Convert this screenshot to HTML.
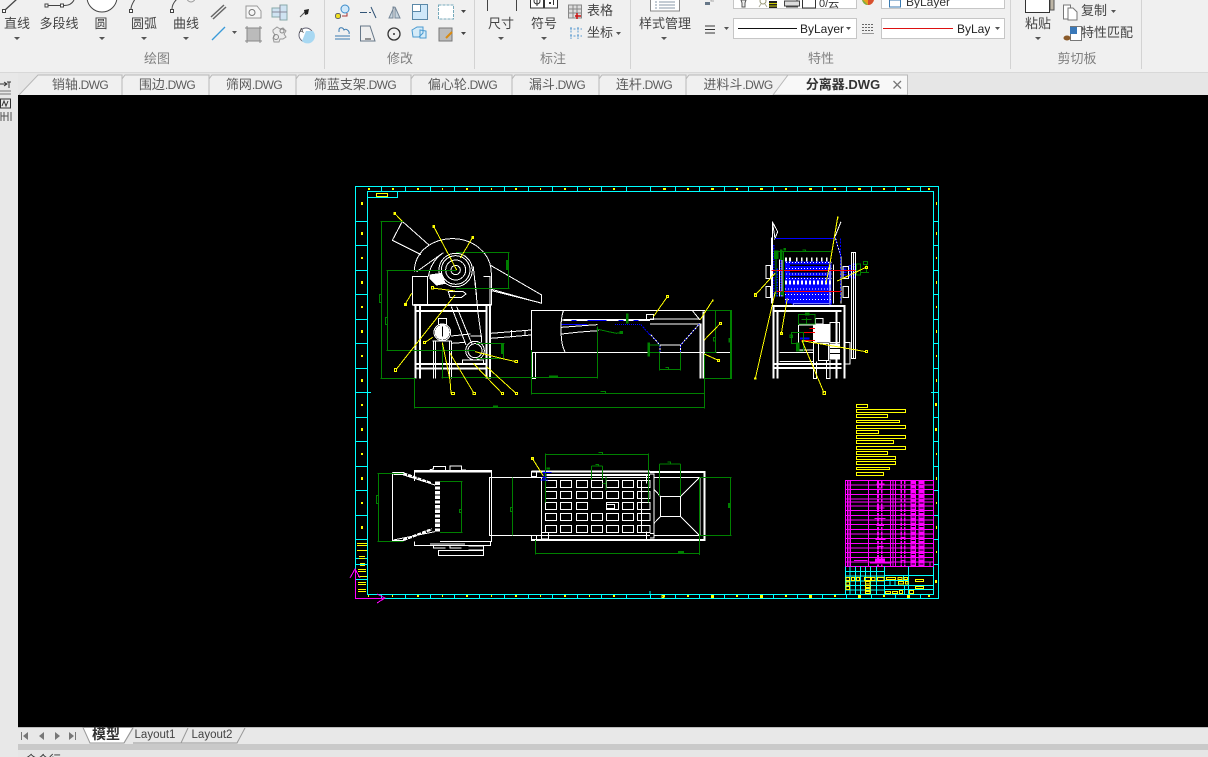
<!DOCTYPE html>
<html lang="zh">
<head>
<meta charset="utf-8">
<title>分离器.DWG</title>
<style>
html,body{margin:0;padding:0;background:#f0f0f0;width:1208px;height:757px;overflow:hidden}
#root{width:1208px;height:757px;position:relative;overflow:hidden;font-family:"Liberation Sans","Noto Sans CJK SC",sans-serif;font-size:13px;color:#444}
.ab{position:absolute}
.t{position:absolute;transform:translate(-50%,-50%);white-space:nowrap;line-height:16px}
.g{color:#808080}
.sep{position:absolute;top:0;width:1px;height:69px;background:#d3d3d3}
.tab{position:absolute;top:75px;height:20px;line-height:20px;text-align:center;font-size:13px;color:#5c5c5c;white-space:nowrap}
.tab span{font-size:12px;letter-spacing:-.6px}
.combo{position:absolute;background:#fff;border:1px solid #c6c6c6;box-sizing:border-box;overflow:hidden}
#root svg{position:absolute;left:0;top:0;overflow:visible}
</style>
</head>
<body>
<div id="root">
<!-- ribbon -->
<div class="ab" style="left:0;top:0;width:1208px;height:72px;background:#f0f0f0;border-bottom:1px solid #d8d8d8"></div>
<div class="ab" style="left:0;top:73px;width:1208px;height:22px;background:#e6e6e6"></div>
<div class="sep" style="left:324px"></div>
<div class="sep" style="left:474px"></div>
<div class="sep" style="left:630px"></div>
<div class="sep" style="left:1010px"></div>
<div class="sep" style="left:1141px"></div>

<div class="t" style="left:17px;top:24px">直线</div>
<div class="t" style="left:59px;top:24px">多段线</div>
<div class="t" style="left:101px;top:24px">圆</div>
<div class="t" style="left:144px;top:24px">圆弧</div>
<div class="t" style="left:186px;top:24px">曲线</div>
<div class="t g" style="left:157px;top:59px">绘图</div>
<div class="t g" style="left:400px;top:59px">修改</div>
<div class="t" style="left:501px;top:24px">尺寸</div>
<div class="t" style="left:544px;top:24px">符号</div>
<div class="t" style="left:600px;top:11px">表格</div>
<div class="t" style="left:600px;top:33px">坐标</div>
<div class="t g" style="left:553px;top:59px">标注</div>
<div class="t" style="left:665px;top:24px">样式管理</div>
<div class="t g" style="left:821px;top:59px">特性</div>
<div class="t" style="left:1038px;top:24px">粘贴</div>
<div class="t" style="left:1094px;top:11px">复制</div>
<div class="t" style="left:1107px;top:33px">特性匹配</div>
<div class="t g" style="left:1077px;top:59px">剪切板</div>

<!-- combos -->
<div class="combo" style="left:733px;top:-6px;width:124px;height:15px"></div>
<div class="combo" style="left:881px;top:-6px;width:124px;height:15px"><div style="position:absolute;left:24px;top:0;line-height:14px;font-size:12px;color:#333">ByLayer</div></div>
<div class="combo" style="left:733px;top:18px;width:124px;height:21px"></div>
<div class="combo" style="left:881px;top:18px;width:124px;height:21px"></div>
<div class="t" style="left:822px;top:29px;color:#222;font-size:12px">ByLayer</div>
<div class="ab" style="left:957px;top:21px;line-height:16px;color:#222;font-size:12px;width:33px;overflow:hidden;white-space:nowrap">ByLayer</div>

<!-- ribbon icons -->
<svg width="1208" height="95" viewBox="0 0 1208 95" fill="none">
 <g stroke="#444" stroke-width="1">
  <path d="M5 10L17 -1" stroke-width="1.300"/><rect x="2.500" y="9.500" width="3" height="3" fill="#fff"/>
  <path d="M48 5.500H60M64 5.500C69 5.500 72 4 74 0"/><rect x="45" y="4" width="3" height="3" fill="#fff"/><rect x="60.500" y="4" width="3" height="3" fill="#fff"/>
  <circle cx="102" cy="-3" r="15" fill="#fff"/>
  <path d="M131 9C131 5 133 3 135 -1"/><rect x="129.500" y="9.500" width="3" height="3" fill="#fff"/>
  <path d="M172 9C172 5 174 2 177 -1"/><rect x="170.500" y="9.500" width="3" height="3" fill="#fff"/><circle cx="191" cy="-2" r="4" stroke="#999"/>
 </g>
 <path d="M211 17L224 5M213 19L226 7" stroke="#666" stroke-width="1.500"/>
 <path d="M212 40L225 27" stroke="#3a9ad9" stroke-width="1.300"/>
 <path d="M246 6H257L261 11V18H246Z" stroke="#999" fill="#f6f6f6"/><circle cx="252" cy="12.500" r="3" stroke="#777"/>
 <path d="M272 8H280V5H287V20H280V17H272Z" stroke="#8aa" fill="#cfe3f2"/><path d="M272 12H287M280 5V20" stroke="#889"/>
 <path d="M300 17L305 12" stroke="#555"/><path d="M304 10L309 9L308 14L305 15Z" fill="#222"/>
 <rect x="247" y="28" width="13" height="13" fill="#bbb" stroke="#888"/><path d="M245 28H262M245 41H262M247 26V43M260 26V43" stroke="#888"/>
 <path d="M273 30l4-3 3 2 3-1 3 3-2 3 2 3-3 2h-3l-1 3h-5l-1-4 2-3-2-3z" stroke="#999" fill="#ececec"/><circle cx="276" cy="37" r="2.500" stroke="#888"/><circle cx="282" cy="31" r="2" stroke="#888"/>
 <circle cx="306" cy="35" r="7" stroke="#667" fill="#fff"/><path d="M306 31H313A7 7 0 0 1 302 41Z" fill="#a8d8f2"/>
 <text x="299" y="33" font-family="Liberation Sans" font-size="7" fill="#444">A</text>
 <g fill="#555"><path d="M232 31h5l-2.500 3zM14 37h6l-3 3zM99 37h6l-3 3zM141 37h6l-3 3zM183 37h6l-3 3zM498 37h6l-3 3zM541 37h6l-3 3zM661 37h6l-3 3zM1035 37h6l-3 3zM616 32h5l-2.500 3zM1111 10h5l-2.500 3zM724 27h5l-2.500 3zM846 27h5l-2.500 3zM995 27h5l-2.500 3z"/></g>
 <!-- modify -->
 <circle cx="345" cy="9" r="4" stroke="#3a8ac9" fill="#cfe8fa"/><rect x="335.500" y="13.500" width="5" height="5" rx="2" fill="#f0e020" stroke="#666"/><path d="M342 16h5v-3" stroke="#a33"/>
 <path d="M360 12.500h7M369 12.500h2M371 7l5 11" stroke="#357"/>
 <path d="M394 7L389 18H393V7ZM395 7L400 18H395Z" fill="#c6d4de" stroke="#789"/>
 <rect x="412.500" y="4.500" width="15" height="15" fill="#cfe8fa" stroke="#5a88a8"/><rect x="412.500" y="4.500" width="8" height="7" fill="#fff" stroke="#5a88a8"/>
 <rect x="438.500" y="5" width="15" height="14" stroke="#7ab" stroke-dasharray="3 1" fill="#fff"/>
 <path d="M335 39H350M335 36H350M339 32V30C339 27 343 27 344 30C346 28 350 31 349 34" stroke="#3a7ab0"/>
 <path d="M360.500 26H370L375 41H360.500Z" fill="#eee" stroke="#678"/><path d="M365 39h6" stroke="#333"/>
 <circle cx="394" cy="34" r="6" stroke="#333" stroke-width="1.300"/><circle cx="394" cy="34" r="1" fill="#333"/>
 <path d="M412 30l5-3h6v6l-4 4h-6zM420 30l6 1v7h-6z" stroke="#4a9ad0" fill="#d5ebf8"/>
 <rect x="439" y="28" width="13" height="13" fill="#bbb" stroke="#777"/><path d="M446 38l6-6" stroke="#d98a10" stroke-width="2"/>
 <path d="M461 10h5l-2.500 3zM461 32h5l-2.500 3z" fill="#444"/>
 <!-- dim -->
 <path d="M487.500 0V11M516.500 0V11" stroke="#444"/>
 <rect x="530.500" y="-3" width="13" height="11" stroke="#333" fill="#fff"/><rect x="544.500" y="-3" width="13" height="11" stroke="#333" fill="#fff"/>
 <circle cx="537" cy="1" r="3" stroke="#333"/><path d="M537 -3V6" stroke="#333"/><path d="M549 2h2v2h-2zM553 -1h1v6h-1z" fill="#333"/>
 <rect x="568.500" y="5" width="13" height="13" fill="#ddd" stroke="#888"/><path d="M568 9h14M568 13h14M573 5v13M577 5v13" stroke="#888"/><path d="M577 13v6M575 16h6" stroke="#c11" stroke-width="1.500"/>
 <path d="M570 29h12M570 36h12M571 27v12M578 27v12" stroke="#5a9ad0" stroke-dasharray="2 1.500"/>
 <!-- style -->
 <rect x="650.500" y="-4" width="29" height="15" stroke="#888" fill="#fff"/><path d="M655 2h2M659 2h16M655 5h2M659 5h16M655 8h2M659 8h16" stroke="#89a"/>
 <!-- properties -->
 <rect x="705" y="2" width="5" height="3" fill="#678"/><path d="M711 0v1h3" stroke="#aaa"/>
 <path d="M705 26h10M705 29.500h10M705 33h10" stroke="#333"/>
 <path d="M738 28.500H797" stroke="#111"/>
 <path d="M741 0h5l-1 3v4h-3v-4z" fill="#eee" stroke="#555"/>
 <path d="M759 7l2-3M767 7l-2-3" stroke="#aa9"/><circle cx="763" cy="1" r="3" stroke="#997"/>
 <path d="M769 1h8v7h-8z" fill="#222"/><path d="M769 3.500h8M769 6h8" stroke="#cc0"/>
 <rect x="784.500" y="1" width="15" height="5" fill="#ddd" stroke="#444"/><path d="M787 -2h10v3M786 7h12" stroke="#444"/>
 <rect x="802.500" y="-2" width="13" height="10" stroke="#333" fill="#fff"/>
 <text x="819" y="7" font-family="Liberation Sans,Noto Sans CJK SC" font-size="11" fill="#333">0/云</text>
 <circle cx="868" cy="-1" r="6" fill="#e8a020"/><path d="M862 -1a6 6 0 0 0 6 6z" fill="#7ab040"/><path d="M868 5a6 6 0 0 0 6 -6h-6z" fill="#d85030"/>
 <rect x="889.500" y="0" width="11" height="7" stroke="#3a7ab0" fill="#fff"/>
 <path d="M862 24.500h12M862 27.500h12M862 30.500h12" stroke="#666" stroke-dasharray="2 1"/><path d="M862 33.500h12" stroke="#999"/>
 <path d="M883 28.500H953" stroke="#d11"/>
 <!-- clipboard -->
 <path d="M1050 -2H1054V10H1050Z" fill="#bdb5a5" stroke="#555"/><rect x="1025.500" y="-4" width="24" height="16.500" fill="#fff" stroke="#333"/>
 <path d="M1063.500 5h7v14h-7z" fill="#fff" stroke="#777"/><path d="M1068 8h5l4 4v8h-9z" fill="#fff" stroke="#777"/>
 <rect x="1070.500" y="26.500" width="11" height="14" fill="#fff" stroke="#777"/><rect x="1070" y="27" width="7" height="7" fill="#3a78b8"/>
 <ellipse cx="1067" cy="38" rx="3.500" ry="2.500" fill="#8a5a2a"/>
 <!-- tabs -->
 <g fill="#f0f0f0" stroke="#b8b8b8">
  <path d="M19 95L38 75H122V95"/>
  <path d="M122 95V79L125 75H209V95"/>
  <path d="M209 95V79L212 75H296V95"/>
  <path d="M296 95V79L299 75H411V95"/>
  <path d="M411 95V79L414 75H512V95"/>
  <path d="M512 95V79L515 75H599V95"/>
  <path d="M599 95V79L602 75H686V95"/>
  <path d="M686 95V79L689 75H788V95"/>
 </g>
 <path d="M773 95L788 75H907.500V95Z" fill="#f8f8f8" stroke="#b8b8b8"/>
 <path d="M893.500 81L901 88.500M901 81L893.500 88.500" stroke="#777" stroke-width="1.300"/>
</svg>
<div class="tab" style="left:40px;width:80px">销轴<span>.DWG</span></div>
<div class="tab" style="left:125px;width:84px">围边<span>.DWG</span></div>
<div class="tab" style="left:212px;width:84px">筛网<span>.DWG</span></div>
<div class="tab" style="left:299px;width:112px">筛蓝支架<span>.DWG</span></div>
<div class="tab" style="left:414px;width:97px">偏心轮<span>.DWG</span></div>
<div class="tab" style="left:515px;width:84px">漏斗<span>.DWG</span></div>
<div class="tab" style="left:602px;width:84px">连杆<span>.DWG</span></div>
<div class="tab" style="left:689px;width:98px">进料斗<span>.DWG</span></div>
<div class="tab" style="left:790px;width:106px;font-weight:bold;color:#333">分离器.DWG</div>

<!-- left panel -->
<div class="ab" style="left:0;top:73px;width:18px;height:684px;background:#e8e8e8"></div>
<svg width="18" height="130" viewBox="0 0 18 130" fill="none" stroke="#333">
 <path d="M0 84H6M4 82L7 84L4 86"/>
 <path d="M7 82H11M9 82V88"/>
 <path d="M0 91H11M0 94H11" stroke="#777"/>
 <rect x="0.500" y="99" width="10" height="9"/><path d="M2 106l2-5 2 5 2-5"/>
 <path d="M1 112V121M4 112V121M1 116H8M8 112V121M11 112V121" stroke="#555"/>
</svg>

<!-- canvas -->
<div class="ab" style="left:18px;top:95px;width:1190px;height:632px;background:#000"></div>

<svg width="1208" height="757" viewBox="0 0 1208 757" fill="none" shape-rendering="crispEdges">
 <!-- frame -->
 <g stroke="#00ffff" stroke-width="1">
  <rect x="355.500" y="186.500" width="583" height="412"/>
  <path d="M367.500 191.500H933.500V594.500H367.500V191.500"/>
  <path d="M381.500 186V191M405.500 186V191M430.500 186V191M454.500 186V191M479.500 186V191M504.500 186V191M528.500 186V191M552.500 186V191M577.500 186V191M601.500 186V191M626.500 186V191M650.500 186V191M675.500 186V191M699.500 186V191M724.500 186V191M748.500 186V191M773.500 186V191M797.500 186V191M822.500 186V191M846.500 186V191M871.500 186V191M895.500 186V191M920.500 186V191"/>
  <path d="M381.500 594V598M405.500 594V598M430.500 594V598M454.500 594V598M479.500 594V598M504.500 594V598M528.500 594V598M552.500 594V598M577.500 594V598M601.500 594V598M626.500 594V598M650.500 594V598M675.500 594V598M699.500 594V598M724.500 594V598M748.500 594V598M773.500 594V598M797.500 594V598M822.500 594V598M846.500 594V598M871.500 594V598M895.500 594V598M920.500 594V598"/>
  <path d="M355 221.500H367M355 245.500H367M355 270.500H367M355 294.500H367M355 319.500H367M355 343.500H367M355 368.500H367M355 392.500H371M355 417.500H367M355 441.500H367M355 466.500H367M355 490.500H367M355 515.500H367M355 539.500H367M355 558.500H367M355 564.500H367M355 579.500H367"/>
  <path d="M933 221.500H938M933 245.500H938M933 270.500H938M933 294.500H938M933 319.500H938M933 343.500H938M933 368.500H938M931 392.500H938M933 417.500H938M933 441.500H938M933 466.500H938M933 490.500H938M933 515.500H938M933 539.500H938M933 564.500H938"/>
 </g>
 <g fill="#ffff00">
  <path d="M368 188h2v2h-2zM392 188h2v2h-2zM417 188h2v2h-2zM442 188h1v2h-1zM466 188h2v2h-2zM491 188h1v2h-1zM515 188h2v2h-2zM540 188h1v2h-1zM564 188h2v2h-2zM589 188h1v2h-1zM613 188h2v2h-2zM663 188h3v2h-3zM687 188h2v2h-2zM711 188h3v2h-3zM736 188h2v2h-2zM760 188h3v2h-3zM785 188h2v2h-2zM809 188h3v2h-3zM834 188h2v2h-2zM858 188h3v2h-3zM883 188h2v2h-2zM907 188h3v2h-3zM928 188h2v2h-2z"/>
  <path d="M368 595h1v2h-1zM392 595h1v2h-1zM417 595h2v2h-2zM442 595h1v2h-1zM466 595h2v2h-2zM491 595h1v2h-1zM515 595h2v2h-2zM540 595h1v2h-1zM564 595h2v2h-2zM589 595h1v2h-1zM613 595h2v2h-2zM663 595h2v2h-2zM687 595h2v2h-2zM711 595h2v2h-2zM736 595h2v2h-2zM760 595h2v2h-2zM785 595h2v2h-2zM809 595h2v2h-2zM834 595h2v2h-2zM858 595h2v2h-2zM883 595h2v2h-2zM907 595h2v2h-2zM928 595h2v2h-2z"/>
  <path d="M361 202h2v3h-2zM361 232h2v3h-2zM361 257h2v2h-2zM361 281h2v3h-2zM361 306h2v2h-2zM361 330h2v3h-2zM361 355h2v2h-2zM361 379h2v3h-2zM361 404h2v2h-2zM361 428h2v3h-2zM361 453h2v2h-2zM361 477h2v3h-2zM361 502h2v2h-2zM361 526h2v3h-2z"/>
  <path d="M936 202h1v3h-1zM936 232h1v3h-1zM936 257h1v2h-1zM936 281h1v3h-1zM936 306h1v2h-1zM936 330h1v3h-1zM936 355h1v2h-1zM936 379h1v3h-1zM935 403h2v3h-2zM935 428h2v3h-2zM936 453h1v2h-1zM936 477h1v3h-1zM936 502h1v2h-1zM936 526h1v3h-1zM936 551h1v2h-1zM935 580h2v3h-2z"/>
 </g>
 <path d="M367.500 191V197.500H397.500V191" stroke="#00ffff"/>
 <rect x="376.500" y="193.500" width="11" height="3" stroke="#ffff00"/>
 <g stroke="#ffff00">
  <path d="M357 543.500h10M357 550.500h10M359 556.500h6M360 563.500h5M358 569.500h8M358 576.500h9M358 582.500h8M358 589.500h8"/>
  <path d="M357 545.500h10M359 558.500h6M360 565.500h5M358 571.500h8M358 584.500h8M358 591.500h8"/>
 </g>
 <!-- UCS -->
 <g stroke="#ff00ff">
  <path d="M355.500 569V598.500H384M350 578L355 569L360 578M377 594L385 598L377 603"/>
 </g>

 <!-- Front view -->
 <g transform="translate(350 180) scale(.33333)">
  <g stroke="#fff" stroke-width="3">
   <path d="M157 124L127 181L213 224M157 124L238 196"/>
   <path d="M193 275C193 212 250 176 308 176C370 176 424 220 424 280V375"/>
   <path d="M420 255L575 345V370L425 328M425 332L570 368"/>
   <rect x="187" y="290" width="46" height="85"/>
   <path d="M400 290H420V375"/>
   <circle cx="317" cy="270" r="50"/><circle cx="317" cy="270" r="43"/><circle cx="317" cy="270" r="30"/><circle cx="317" cy="270" r="14"/>
   <path d="M200 275L280 218M235 290C240 260 255 235 280 218M370 260L385 405L395 480M375 300L380 350"/>
   <path d="M240 285L275 280L285 310L260 315L240 295Z" fill="#fff"/>
   <path d="M295 335H340L348 342L335 352H300Z"/>
   <path d="M304 380L348 495M320 380L365 490"/>
   <rect x="265" y="415" width="25" height="18"/>
   <circle cx="277" cy="457" r="25"/><circle cx="277" cy="457" r="21" fill="#fff"/><path d="M277 440V470" stroke="#000"/>
   <path d="M247 483H305M250 483V595M256 483V595M299 483V595M305 483V595"/>
   <circle cx="375" cy="512" r="28"/><circle cx="375" cy="512" r="21"/>
   <path d="M337 540H400V550H337Z"/>
   <path d="M303 468L362 462M305 490L345 487M362 468H395V488"/>
   <path d="M422 460L544 450M422 475L544 465M485 450V472M525 450V466"/>
  </g>
  <g stroke="#fff" stroke-width="6">
   <path d="M196 375V595M210 375V595M409 375V595M420 375V595"/>
   <path d="M190 375H424M196 393H410M196 552H410M196 565H410"/>
  </g>
  <!-- conveyor -->
  <g stroke="#fff" stroke-width="3">
   <rect x="544.500" y="391.500" width="600" height="126"/>
   <path d="M640 393C630 420 630 490 645 515"/>
   <path d="M635 442L712 436L742 434M635 462L690 456L745 452M635 420H890M635 433H712"/>
   <path d="M547 517V595H557V517"/>
   <path d="M890 418V403H900"/>
  </g>
  <path d="M640 420H900" stroke="#fff" stroke-width="6"/>
  <g stroke="#0000ff" stroke-width="3">
   <path d="M664 421H680M712 421H770M805 421H820M850 421H865M634 433H712"/>
   <path d="M795 433H872" stroke-dasharray="3 3"/>
   <path d="M872 433L900 465" stroke-dasharray="6 3"/>
  </g>
  <!-- green -->
  <g stroke="#008000" stroke-width="3">
   <path d="M91 124H160M94 124V595M91 595H197M88 343H94V368H88Z"/>
   <path d="M109 271H320M112 271V511M109 511H375M106 412H112V433H106Z"/>
   <path d="M318 217H479M475 217V325M318 325H479"/>
   <path d="M378 490H464M460 490V538M378 535H462"/>
   <path d="M278 490V595M275 592H742M742 440V596"/>
   <path d="M193 595V686M193 682H900M545 510V643M545 640H900M751 634H767V640"/>
   <path d="M740 447L775 455L800 460L817 457M810 454H818V461H810Z"/>
  </g>
  <g fill="#008000"><rect x="468" y="240" width="7" height="30"/><rect x="453" y="492" width="8" height="30"/><rect x="597" y="586" width="27" height="6"/><rect x="429" y="676" width="15" height="6"/><rect x="828" y="400" width="8" height="30"/><rect x="892" y="487" width="8" height="42"/></g>
  <!-- leaders -->
  <g stroke="#ffff00" stroke-width="3">
   <path d="M134 100L157 124M251 139L320 270M368 172L331 234M247 324L315 333M185 340L166 372M315 345L137 570M248 472L224 488M277 488L300 600L303 640M300 520L372 640M370 550L456 640M410 560L498 640M375 515L462 537L498 545"/>
  </g>
  <g stroke="#ffff00" stroke-width="3" fill="#000">
   <rect x="132" y="98" width="5" height="5" fill="#ffff00"/><rect x="249" y="137" width="5" height="5" fill="#ffff00"/><rect x="366" y="170" width="5" height="5" fill="#ffff00"/>
   <rect x="245" y="320" width="6" height="7"/><rect x="163" y="370" width="6" height="6" fill="#ffff00"/><rect x="133" y="566" width="7" height="8"/>
   <rect x="221" y="485" width="6" height="6"/><rect x="305" y="637" width="8" height="6"/><rect x="369" y="637" width="7" height="6"/><rect x="454" y="637" width="6" height="6"/><rect x="496" y="637" width="6" height="6"/><rect x="495" y="541" width="7" height="7"/>
  </g>
 </g>

 <!-- Side view -->
 <g transform="translate(650 180) scale(.33333)">
  <g stroke="#fff" stroke-width="3">
   <path d="M0 391H163M0 417H150M0 432H150M0 517H160M0 462L30 495H92L150 430M128 393L150 420M30 495V517M92 495V517"/>
   <path d="M0 404H10V418H0"/>
  </g>
  <path d="M152 430V596M161 395V596" stroke="#fff" stroke-width="6"/>
  <path d="M0 462L30 495M92 495L150 430M30 500V515M92 500V515" stroke="#0000ff" stroke-width="3" stroke-dasharray="4 6"/>
  <g stroke="#008000" stroke-width="3">
   <path d="M165 391H245V596H165M241 391V596M197 391V517H165M165 517H200"/>
   <path d="M190 472H196V483H190Z"/>
   <path d="M163 520V686M0 640H163M0 682H163M0 495H30M0 517H28M28 517V571M92 517V571M28 568H92M46 562H56V568"/>
  </g>
  <rect x="235" y="474" width="6" height="14" fill="#008000"/>
  <g stroke="#ffff00" stroke-width="3">
   <path d="M10 410L52 350M150 420L188 361M163 480L211 430M163 522L205 541"/>
  </g>
  <rect x="49" y="347" width="6" height="6" stroke="#ffff00" stroke-width="3"/><rect x="186" y="358" width="5" height="6" fill="#ffff00"/><rect x="208" y="428" width="6" height="6" stroke="#ffff00" stroke-width="3"/><rect x="202" y="538" width="6" height="6" stroke="#ffff00" stroke-width="3"/>
  <!-- blue mass -->
  <rect x="405" y="245" width="140" height="125" fill="#0000ff"/>
  <path d="M420 256H535M420 275H535M420 290H535" stroke="#000" stroke-width="4"/>
  <g stroke="#fff" stroke-dasharray="3 6" stroke-width="3">
   <path d="M408 248H545M408 266H545M408 282H545M408 296H545M405 327H545M405 343H545M405 358H545"/>
  </g>
  <path d="M405 307H545" stroke="#fff" stroke-width="12" stroke-dasharray="6 6"/>
  <path d="M370 195V350M380 265V350M394 240V350M600 255V295M612 250V295M585 258V290" stroke="#0000ff" stroke-width="8" stroke-dasharray="5 3"/>
  <g stroke="#fff" stroke-width="3">
   <path d="M367 125L383 155L375 175L367 125V370M573 125L555 170L573 230V370M364 172V370"/>
   <path d="M348 256H362V296H348ZM348 320H362V352H348ZM579 260H595V296H579ZM579 320H595V352H579Z"/>
   <path d="M604 217H616V536H604ZM610 217V536"/>
   <path d="M550 253V370M540 255V375"/>
   <path d="M408 232V245M420 232V245M440 232V245M455 232V245M470 232V245M485 232V245M500 232V245M515 232V245M530 232V245" stroke-width="5"/>
   <path d="M388 238V350M396 238V350"/>
   <path d="M430 370H540V378H430Z"/>
   <path d="M388 517H490M388 545H490"/>
   <path d="M445 435H490V510H445Z"/>
   <rect x="540" y="428" width="28" height="60"/>
   <rect x="505" y="490" width="30" height="52"/>
   <path d="M491 490V596H500V545M530 540V596H540V540"/>
   <path d="M587 488H600V552H587"/>
  </g>
  <g stroke="#fff" stroke-width="6"><path d="M370 375V596M383 390V596M560 390V596M583 375V596"/><path d="M367 378H583M370 393H575M370 552H575M370 564H575"/></g>
  <rect x="490" y="432" width="52" height="56" fill="#fff"/>
  <rect x="538" y="490" width="32" height="48" fill="#fff"/>
  <rect x="497" y="415" width="22" height="17" stroke="#fff" stroke-width="3"/>
  <path d="M540 505H570M540 520H570" stroke="#000" stroke-width="3"/>
  <g stroke="#0000ff" stroke-width="3">
   <path d="M375 175H553"/>
   <path d="M572 175V365M555 170L573 230" stroke-dasharray="6 4"/>
   <path d="M426 372H545V360M426 372V355"/>
  </g>
  <path d="M365 271H617M380 334H575M478 445H495M460 457H495M455 482H495" stroke="#ff0000" stroke-width="3"/>
  <path d="M450 476H478" stroke="#0000ff" stroke-width="6"/>
  <g stroke="#008000" stroke-width="3">
   <path d="M378 215H543M378 215V350M400 215V350M458 210H467V215"/>
   <path d="M445 403H495V432H445ZM445 403V435M455 418H485M470 412V430"/>
   <path d="M425 457H460V513H440V490H425ZM420 465H428V473H420Z"/>
   <path d="M640 245H653V253H640ZM620 252H632V285H620ZM632 277H657M650 253V277"/>
  </g>
  <g fill="#008000"><rect x="390" y="208" width="8" height="32"/><rect x="372" y="212" width="14" height="25"/><rect x="401" y="204" width="7" height="8"/><rect x="392" y="335" width="9" height="10"/><rect x="438" y="488" width="10" height="25"/><rect x="465" y="398" width="14" height="8"/></g>
  <g stroke="#ffff00" stroke-width="3">
   <path d="M563 112L540 250L528 310M648 262L562 303M375 280L316 345M376 335L316 595M412 355L394 460M456 482L522 638M456 482L648 515"/>
  </g>
  <rect x="561" y="109" width="5" height="6" fill="#ffff00"/><rect x="646" y="259" width="6" height="6" stroke="#ffff00" stroke-width="3"/><rect x="313" y="341" width="7" height="8" stroke="#ffff00" stroke-width="3"/><rect x="312" y="592" width="7" height="7" fill="#ffff00"/><rect x="391" y="457" width="6" height="6" stroke="#ffff00" stroke-width="3"/><rect x="519" y="635" width="7" height="8" stroke="#ffff00" stroke-width="3"/><rect x="646" y="512" width="6" height="6" stroke="#ffff00" stroke-width="3"/>
 </g>

 <!-- Top view left -->
 <g transform="translate(350 420) scale(.33333)">
  <g stroke="#fff" stroke-width="3">
   <path d="M127 157V363M127 157H160M127 362H160"/>
   <path d="M130 163H155L255 195M130 360L255 335"/>
   <path d="M193 183V152H425V365H270M193 152H270"/>
   <path d="M238 150L250 147V140H287V150M300 150V138H335V150H348"/>
   <path d="M193 365V377H422V365M240 372H345M250 377V384H287M300 377V384H335M355 378H400V390H355"/>
   <rect x="265" y="391" width="135" height="16"/>
   <rect x="418" y="172" width="157" height="175"/>
   <path d="M575 172H900M575 347H900"/>
  </g>
  <path d="M160 160L245 190M160 360L245 328" stroke="#fff" stroke-width="7" stroke-dasharray="12 3"/>
  <path d="M262 185V337" stroke="#fff" stroke-width="15" stroke-dasharray="10 4"/>
  <path d="M193 155H425" stroke="#fff" stroke-width="6"/>
  <path d="M545 155H900M545 360H900M590 165H900" stroke="#fff" stroke-width="6"/>
  <path d="M575 175V345" stroke="#fff" stroke-width="3"/>
  <path d="M545 155H560V170H545ZM545 347H560V362H545Z" stroke="#fff" stroke-width="3"/>
  <rect x="575" y="337" width="20" height="20" stroke="#fff" stroke-width="3"/>
  <g stroke="#fff" stroke-width="3">
   <rect x="586" y="181" width="34" height="22"/><rect x="632" y="181" width="33" height="22"/><rect x="679" y="181" width="34" height="22"/><rect x="724" y="181" width="34" height="22"/><rect x="769" y="181" width="37" height="22"/><rect x="817" y="181" width="34" height="22"/><rect x="862" y="181" width="38" height="22"/>
   <rect x="586" y="214" width="34" height="22"/><rect x="632" y="214" width="33" height="22"/><rect x="679" y="214" width="34" height="22"/><rect x="724" y="214" width="34" height="22"/><rect x="769" y="214" width="37" height="22"/><rect x="817" y="214" width="34" height="22"/><rect x="862" y="214" width="38" height="22"/>
   <rect x="586" y="247" width="34" height="22"/><rect x="632" y="247" width="33" height="22"/><rect x="679" y="247" width="34" height="22"/><rect x="769" y="247" width="37" height="22"/><rect x="769" y="253" width="25" height="13"/><rect x="817" y="247" width="34" height="22"/><rect x="862" y="247" width="38" height="22"/>
   <rect x="586" y="280" width="34" height="22"/><rect x="632" y="280" width="33" height="22"/><rect x="679" y="280" width="34" height="22"/><rect x="724" y="280" width="34" height="22"/><rect x="769" y="280" width="37" height="22"/><rect x="817" y="280" width="34" height="22"/><rect x="862" y="280" width="38" height="22"/>
   <rect x="586" y="316" width="34" height="22"/><rect x="632" y="316" width="33" height="22"/><rect x="679" y="316" width="34" height="22"/><rect x="724" y="316" width="34" height="22"/><rect x="769" y="316" width="37" height="22"/><rect x="817" y="316" width="34" height="22"/><rect x="862" y="316" width="38" height="22"/>
   <path d="M874 181V338M890 165V190M890 335V357"/>
  </g>
  <g stroke="#008000" stroke-width="3">
   <path d="M82 160H160M85 160V364M82 364H160M79 226H85V250H79Z"/>
   <path d="M270 184H338M334 184V337M270 337H338M328 268H334V278H328Z"/>
   <path d="M487 172V347M481 262H487V275H481Z"/>
   <path d="M586 103H895M586 100V248M895 100V248M745 97H758V103"/>
   <path d="M724 138H758M724 138V180M758 138V180M736 133H746V138M768 170V210M758 190H768"/>
   <path d="M556 360V404M556 401H900"/>
  </g>
  <rect x="590" y="142" width="10" height="7" fill="#008000"/>
  <path d="M547 115L580 168" stroke="#ffff00" stroke-width="3"/>
  <rect x="545" y="112" width="6" height="7" stroke="#ffff00" stroke-width="3"/>
  <path d="M578 157H605M582 155V180M572 180H594M577 172H590" stroke="#0000ff" stroke-width="3"/>
 </g>

 <!-- right top view, notes, table -->
 <g transform="translate(650 400) scale(.33333)">
  <path d="M0 216H164V420H0" stroke="#fff" stroke-width="6"/>
  <g stroke="#fff" stroke-width="3">
   <rect x="12" y="232" width="138" height="175"/>
   <path d="M0 222H12V250M0 400H12V414H0"/>
   <rect x="31" y="289" width="61" height="61"/>
   <path d="M92 289L148 233M92 350L148 406M31 350L12 370M31 289L12 268"/>
  </g>
  <g stroke="#008000" stroke-width="3">
   <path d="M28 192H92M28 192V288M92 192V288M52 186H62V192"/>
   <path d="M150 232H245M241 232V406M150 406H245M148 232V465M0 460H150"/>
   <path d="M0 22H163M163 0V26"/>
  </g>
  <rect x="234" y="309" width="7" height="15" fill="#008000"/><rect x="84" y="453" width="18" height="7" fill="#008000"/>
  <g stroke="#ffff00" stroke-width="3">
   <rect x="619" y="13" width="34" height="10"/><rect x="619" y="28" width="148" height="10"/><rect x="619" y="43" width="94" height="10"/><rect x="619" y="61" width="130" height="7"/><rect x="619" y="76" width="148" height="10"/><rect x="619" y="91" width="67" height="10"/><rect x="619" y="106" width="148" height="10"/><rect x="619" y="121" width="112" height="10"/><rect x="619" y="139" width="148" height="10"/><rect x="619" y="154" width="94" height="10"/><rect x="619" y="169" width="118" height="10"/><rect x="619" y="184" width="118" height="10"/><rect x="619" y="202" width="100" height="7"/><rect x="619" y="217" width="82" height="10"/>
  </g>
  <!-- magenta table -->
  <g stroke="#ff00ff" stroke-width="3">
   <rect x="586" y="241" width="264" height="259"/>
   <path d="M586 255H850M586 269H850M586 283H850M586 297H850M586 306H850M586 318H850M586 332H850M586 346H850M586 360H850M586 374H850M586 388H850M586 402H850M586 416H850M586 430H850M586 444H850M586 458H850M586 472H850M586 486H850"/>
   <path d="M592 241V500M597 241V500M601 241V500M655 241V500M721 241V500M729 241V500M737 241V500M783 241V500M797 241V500M807 241V500M822 241V500M840 486V500"/>
   <path d="M680 252H704M682 264H698M680 324H704M674 356H706M680 376H702M676 418H706M672 430H708M682 440H700M612 481H652M752 345H766M752 412H766M752 482H766"/>
  </g>
  <g stroke="#ff00ff" stroke-width="5" stroke-dasharray="11 3">
   <path d="M684 241V500M695 241V500M754 241V500M764 241V500M786 241V500M790 241V500M795 241V500M811 241V500M815 241V500M820 241V500"/>
  </g>
  <rect x="660" y="484" width="65" height="7" fill="#ff00ff"/><rect x="675" y="476" width="30" height="8" fill="#ff00ff"/>
  <!-- title block -->
  <g stroke="#00ffff" stroke-width="3">
   <path d="M586 500V583M850 500V583M586 515H704M586 528H704M586 543H704M600 500V583M616 500V583M632 500V583M646 500V583M662 500V583M679 500V583M704 500V583M775 500V583M704 526H850M704 541H775M704 556H850M704 569H850M586 557H704M586 570H704M720 541V556M735 541V556M760 526V541M745 541V556M763 556V583M0 573V583"/>
  </g>
  <g stroke="#ffff00" stroke-width="3">
   <rect x="588" y="532" width="11" height="9"/><rect x="588" y="546" width="11" height="9"/><rect x="588" y="560" width="11" height="9"/><rect x="604" y="532" width="10" height="9"/><rect x="619" y="532" width="10" height="9"/><rect x="643" y="532" width="19" height="9"/><rect x="665" y="532" width="10" height="9"/><rect x="682" y="532" width="20" height="9"/><rect x="646" y="545" width="14" height="7"/><rect x="646" y="556" width="14" height="7"/><rect x="646" y="565" width="14" height="7"/><rect x="646" y="574" width="14" height="7"/><rect x="709" y="532" width="28" height="7"/><rect x="744" y="532" width="12" height="7"/><rect x="762" y="532" width="11" height="7"/><rect x="745" y="545" width="16" height="7"/><rect x="766" y="545" width="8" height="7"/><rect x="796" y="538" width="25" height="7"/><rect x="796" y="559" width="25" height="7"/><rect x="706" y="574" width="16" height="7"/><rect x="727" y="574" width="16" height="7"/><rect x="748" y="571" width="10" height="10"/><rect x="779" y="571" width="12" height="10"/><rect x="36" y="586" width="6" height="6"/><rect x="184" y="586" width="6" height="6"/><rect x="331" y="586" width="6" height="6"/><rect x="478" y="586" width="6" height="6"/><rect x="625" y="586" width="6" height="6"/><rect x="772" y="586" width="6" height="6"/>
  </g>
 </g>
</svg>

<!-- bottom bars -->
<div class="ab" style="left:18px;top:727px;width:1190px;height:17px;background:#e8e8e8;border-top:1px solid #bbb;box-sizing:border-box"></div>
<div class="ab" style="left:18px;top:744px;width:1190px;height:6px;background:#c9c9c9"></div>
<div class="ab" style="left:18px;top:750px;width:1190px;height:7px;background:#e6e6e6"></div>
<svg width="1208" height="757" viewBox="0 0 1208 757" fill="none">
 <g fill="#777">
  <path d="M21 732h1v8h-1zM28 732v8l-5-4zM44 732v8l-5-4zM55 732v8l5-4zM69 732v8l5-4zM75 732h1v8h-1z"/>
 </g>
 <path d="M83 727.500L90 743H124L133 727.500Z" fill="#fff" stroke="#999"/>
 <path d="M124 743L133 728M133 743H181L188 728M181 743H237L245 728" stroke="#999"/>
</svg>
<div class="t" style="left:106px;top:734px;font-weight:bold;color:#333;font-size:14px">模型</div>
<div class="t" style="left:155px;top:735px;font-size:11.500px;color:#444">Layout1</div>
<div class="t" style="left:212px;top:735px;font-size:11.500px;color:#444">Layout2</div>
<div class="ab" style="left:25px;top:753px;font-size:12px;line-height:14px;color:#333">命令行:</div>
</div>
</body>
</html>
